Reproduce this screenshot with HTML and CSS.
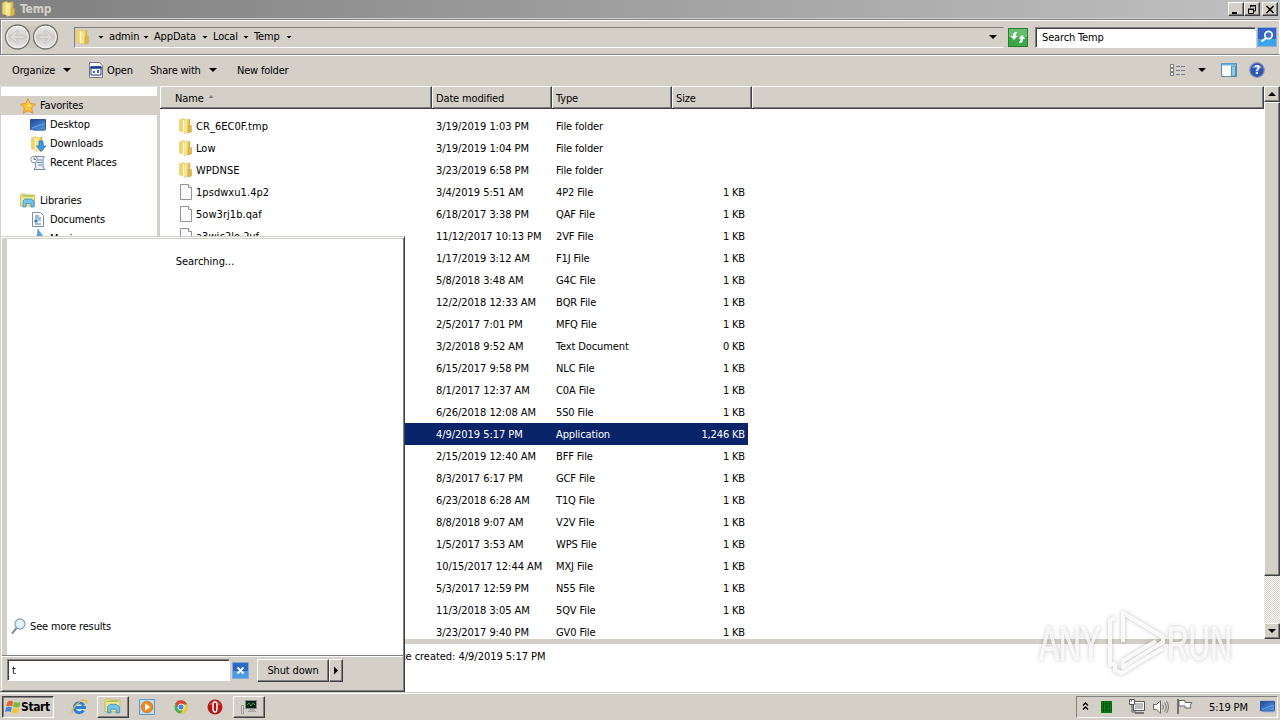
FILE: index.html
```
<!DOCTYPE html>
<html lang="en">
<head>
    <meta charset="UTF-8">
    <meta name="viewport" content="width=device-width, initial-scale=1.0">
    <title>Temp</title>
    <link rel="stylesheet" href="styles.css">
</head>
<body>
    <!-- Shared icons -->
    <svg class="sprite" width="0" height="0">
        <defs>
            <linearGradient id="gFolder" x1="0" x2="1"><stop offset="0" stop-color="#fbf0a8"/><stop offset=".5" stop-color="#f3e07c"/><stop offset="1" stop-color="#cfa83c"/></linearGradient>
            <linearGradient id="gBlue" x1="0" y1="0" x2="1" y2="1"><stop offset="0" stop-color="#1c4796"/><stop offset="1" stop-color="#5b9be8"/></linearGradient>
            <linearGradient id="gBtn" x1="0" y1="0" x2="0" y2="1"><stop offset="0" stop-color="#efedea"/><stop offset=".5" stop-color="#cfccc8"/><stop offset="1" stop-color="#eceae7"/></linearGradient>
            <symbol id="folder" viewBox="0 0 16 16">
                <path d="M1.500 2l4-1.500 1.500 1V14l-5.500-1z" fill="#efd56a" stroke="#e0c465" stroke-width=".6"/>
                <path d="M6 2l6-1v13l-6 1.500z" fill="url(#gFolder)" stroke="#d9ba55" stroke-width=".5"/>
                <path d="M10 8l3.500-.5V14L10 15z" fill="#dcb94e" stroke="#c6a140" stroke-width=".5"/>
                <path d="M5.500 2v12" stroke="#fffbdc" stroke-width="1.200"/>
            </symbol>
            <symbol id="file" viewBox="0 0 16 16">
                <path d="M2.500.5h8l3 3v12h-11z" fill="#fafafa" stroke="#949494"/>
                <path d="M10.500.5v3h3" fill="#fff" stroke="#949494"/>
            </symbol>
            <symbol id="library" viewBox="0 0 16 16">
                <path d="M.5 3.500V2l1-1h4l1 1h8v11h-14z" fill="#f4e68a" stroke="#cdb04a" stroke-width=".8"/>
                <path d="M2 3h11" stroke="#7cba4c"/>
                <path d="M3 8l2-2h6l3 2v6h-3v-3.500H6V14H3z" fill="#74c4ee" stroke="#3b8fc4" stroke-width=".8"/>
            </symbol>
            <symbol id="monitor" viewBox="0 0 16 16">
                <path d="M.5 2.500h15v10H.5z" fill="url(#gBlue)" stroke="#2b5296"/>
                <path d="M1 12.500h14v1.500H4z" fill="#6a98d0"/>
                <path d="M2 11c4-1 8-4 13-4" stroke="#67a6ef" fill="none"/>
            </symbol>
            <symbol id="lens" viewBox="0 0 16 16">
                <path d="M1.500 15l4-5" stroke="#8f8f9b" stroke-width="2.200" stroke-linecap="round"/>
                <circle cx="9" cy="6" r="5" fill="#e3f1fc" stroke="#8ea6c0" stroke-width="1.300"/>
                <path d="M6.500 5a3 3 0 0 1 3-2" stroke="#fff" stroke-width="1.300" fill="none"/>
            </symbol>
        </defs>
    </svg>

    <div class="window">
        <div class="titlebar">
            <svg class="icon"><use href="#folder"/></svg>
            <span class="title">Temp</span>
            <div class="controls">
                <button><svg width="12" height="11"><path d="M2 9h5" stroke="#000" stroke-width="2"/></svg></button>
                <button><svg width="12" height="11"><path d="M4.500 3.500V2h5v5H8M4 1.500h6M2.500 5.500h5v4h-5zM2 5h6" fill="none" stroke="#000"/></svg></button>
                <button class="close"><svg width="12" height="11"><path d="M2.500 2l7 7M9.500 2l-7 7" stroke="#000" stroke-width="1.500"/></svg></button>
            </div>
        </div>

        <div class="addressbar">
            <svg class="nav-buttons" width="58" height="28" viewBox="0 0 58 28">
                <path d="M14 3h28v22H14z" fill="#cbc7c0"/>
                <g fill="url(#gBtn)" stroke="#77736e" stroke-width="1.300"><circle cx="13.500" cy="14" r="12"/><circle cx="41.500" cy="14" r="12"/></g>
                <g fill="none" stroke="#f8f7f5" stroke-width="1"><circle cx="13.500" cy="14" r="10.700"/><circle cx="41.500" cy="14" r="10.700"/></g>
                <g fill="#dedbd7" stroke="#c4c0bb" stroke-width=".8"><path d="M6 14l6-6h3l-4 4.500h9v3h-9l4 4.500h-3z"/><path d="M49 14l-6-6h-3l4 4.500h-9v3h9l-4 4.500h3z"/></g>
            </svg>
            <div class="breadcrumb">
                <svg class="icon"><use href="#folder"/></svg>
                <i class="arrow a0"></i><span class="c-admin">admin</span>
                <i class="arrow"></i><span class="c-appdata">AppData</span>
                <i class="arrow"></i><span class="c-local">Local</span>
                <i class="arrow"></i><span class="c-temp">Temp</span>
                <i class="arrow"></i>
                <i class="arrow big drop"></i>
            </div>
            <svg class="refresh" width="20" height="19" viewBox="0 0 20 19">
                <rect x=".5" y=".5" width="19" height="18" fill="#39a845" stroke="#287d31"/>
                <path d="M1 1h18v8H1z" fill="#67bd6c"/>
                <path d="M9 4c-3 0-4 1-4 4H2.500L6 12l3.500-4H7.500c0-2 .5-2 1.500-3zM11 15c3 0 4-1 4-4h2.500L14 7l-3.500 4h2c0 2-.5 2-1.500 3z" fill="#fff"/>
            </svg>
            <div class="search">Search Temp</div>
            <svg class="search-btn" width="20" height="20" viewBox="0 0 20 20">
                <rect x=".5" y=".5" width="19" height="19" fill="#3463c8" stroke="#9ab0d0"/>
                <path d="M1 12h18v7H1z" fill="#39a5e8"/>
                <path d="M4.500 14.500L9 11" stroke="#fff" stroke-width="2.200"/>
                <circle cx="11.500" cy="8" r="3.700" fill="#3b75ce" stroke="#fff" stroke-width="1.700"/>
            </svg>
        </div>

        <div class="toolbar">
            <span class="t-organize">Organize</span><i class="arrow big"></i>
            <svg class="open-icon" width="14" height="16" viewBox="0 0 14 16">
                <path d="M.5.5h10l3 3v12H.5z" fill="#fff" stroke="#777"/>
                <path d="M2 5h10v8H2z" fill="#fff" stroke="#173a8c"/><path d="M1.500 5.500h11" stroke="#173a8c" stroke-width="2.500"/>
                <path d="M4 9h2v2H4zM8 8h2v3H8z" fill="#395fb0"/>
            </svg>
            <span class="t-open">Open</span>
            <span class="t-share">Share with</span><i class="arrow big"></i>
            <span class="t-new">New folder</span>
            <div class="view-tools">
                <svg width="16" height="13" viewBox="0 0 16 13">
                    <path d="M.5.5h3v3h-3zM.5 4.500h3v3h-3zM.5 8.500h3v3h-3z" fill="#fff" stroke="#777"/>
                    <path d="M6 2.500h4M11 2.500h4M6 6.500h4M11 6.500h4M6 10.500h4M11 10.500h4" stroke="#6f7f95"/>
                </svg>
                <i class="arrow big"></i>
                <svg class="pane" width="16" height="14" viewBox="0 0 16 14">
                    <path d="M.5.5h15v13H.5z" fill="#fff" stroke="#5687ad"/><path d="M1 1.500h14" stroke="#6faed8" stroke-width="2"/>
                    <path d="M10.500 3h4v10h-4z" fill="#8cc8e8" stroke="#5292b8"/>
                </svg>
                <svg class="help" width="16" height="16" viewBox="0 0 16 16">
                    <circle cx="8" cy="8" r="7.300" fill="#2b55b8" stroke="#8c95a8" stroke-width="1.200"/>
                    <path d="M2.500 6a6 5 0 0 1 11 0z" fill="#6b90dd"/>
                    <text x="8" y="12.300" text-anchor="middle" font-size="12" font-weight="bold" fill="#fff">?</text>
                </svg>
            </div>
        </div>

        <div class="content">
            <div class="sidebar">
                <div class="nav-item root selected">
                    <svg class="icon" viewBox="0 0 16 16"><path d="M8 .7l2.200 5 5.300.5-4 3.600 1.200 5.400L8 12.400l-4.700 2.800 1.200-5.400-4-3.600 5.300-.5z" fill="#fcc63a" stroke="#e08a1c" stroke-width=".9"/><path d="M8 3l1.300 4H13L8 9z" fill="#ffe98a"/></svg>
                    <span class="n-fav">Favorites</span>
                </div>
                <div class="nav-item"><svg class="icon"><use href="#monitor"/></svg><span>Desktop</span></div>
                <div class="nav-item">
                    <svg class="icon" viewBox="0 0 16 16"><use href="#folder"/><path d="M9 5h4v5h3l-5 5.500L6.500 10H9z" fill="#3a9be0" stroke="#1e6db4" stroke-width=".7"/></svg>
                    <span>Downloads</span>
                </div>
                <div class="nav-item">
                    <svg class="icon" viewBox="0 0 16 16"><path d="M5 1.500h9.500L13 4v8l2 2.500H4L5.500 12z" fill="#e8f0f6" stroke="#7d8c99"/><path d="M7 5h5M7 7.500h5M8 10h4" stroke="#5590c0"/><circle cx="4" cy="4.500" r="3.300" fill="#f5f9fc" stroke="#8898a5"/><path d="M4 2.500v2h2" stroke="#456" fill="none" stroke-width=".8"/></svg>
                    <span>Recent Places</span>
                </div>
                <div class="nav-item"></div>
                <div class="nav-item root"><svg class="icon"><use href="#library"/></svg><span>Libraries</span></div>
                <div class="nav-item">
                    <svg class="icon" viewBox="0 0 16 16"><path d="M2.500.5h8l3 3v11h-11z" fill="#fff" stroke="#7b8ea3"/><path d="M5 4h4M5 6h6M8 8h3M5 12h6" stroke="#4279b5"/><path d="M4.500 7.500h3v3h-3z" fill="#3e6fa8"/></svg>
                    <span>Documents</span>
                </div>
                <div class="nav-item">
                    <svg class="icon music" viewBox="0 0 16 16"><path d="M8 0c1 4 6 5 4 10-1-3-3-3-4-4v7a3 3 0 1 1-1-2z" fill="#58a8e4" stroke="#2f7ab8" stroke-width=".6"/></svg>
                    <span>Music</span>
                </div>
            </div>
            <div class="files">
                <div class="file-header">
                    <div class="col name">Name <i class="sort"></i></div>
                    <div class="col date">Date modified</div>
                    <div class="col type">Type</div>
                    <div class="col size">Size</div>
                    <div class="col rest"></div>
                </div>
                <div class="file-list" id="fileList"></div>
            </div>
            <div class="scrollbar">
                <button><i class="arrow big up"></i></button>
                <div class="thumb"></div>
                <div class="track"></div>
                <button><i class="arrow big"></i></button>
            </div>
        </div>

        <div class="details"><span>Date created: 4/9/2019 5:17 PM</span></div>
    </div>

    <div class="taskbar">
        <div class="start">
            <svg width="16" height="16" viewBox="0 0 16 16">
                <path d="M2.500 3Q5 1 8 2.500L7 7.500Q4 6 1 7.500z" fill="#e5622a"/><path d="M9 3q3 1.500 6.500 0l-1.200 5Q11 9 8 7.800z" fill="#79b93c"/>
                <path d="M1 8.500Q4 7 6.800 8.500L5.800 13Q3 11.500 0 13z" fill="#3f85dc"/><path d="M7.800 9q3 1 6.300 0L13 13.500q-3 1.500-6.200 0z" fill="#f7c42c"/>
            </svg>
            <span>Start</span>
        </div>
        <div class="tasks">
            <div class="task">
                <svg width="16" height="16" viewBox="0 0 16 16"><circle cx="8" cy="8.500" r="5" fill="#c9e8fa"/><path d="M12.800 6.500A5 5 0 1 0 12.500 11.500M4 8.500h9.500V7" fill="none" stroke="#2a80d0" stroke-width="2.800"/><path d="M1.500 14.500C-1 11 10-1 15 1.500c1 1-.5 3-.5 3" fill="none" stroke="#e9bb35" stroke-width="1.300"/></svg>
            </div>
            <div class="task raised"><svg width="18" height="17"><use href="#library"/></svg></div>
            <div class="task">
                <svg width="16" height="16" viewBox="0 0 16 16"><path d="M.5.500h15v15H.5z" fill="#b9def5" stroke="#5c9dcc"/><circle cx="8" cy="8" r="5.800" fill="#f18a1c" stroke="#d06c10" stroke-width=".7"/><path d="M6 4.500l5.500 3.500L6 11.500z" fill="#fff"/></svg>
            </div>
            <div class="task">
                <svg width="14" height="14" viewBox="0 0 16 16"><circle cx="8" cy="8" r="7.500" fill="#4caf50"/><path d="M1.500 4.200A7.500 7.500 0 0 1 15 5H8L5 10z" fill="#de4436"/><path d="M15 5a7.500 7.500 0 0 1-7.500 10.500L11 9.500 8 5z" fill="#fbc92f"/><circle cx="8" cy="8" r="3.500" fill="#4386ec" stroke="#fff"/></svg>
            </div>
            <div class="task">
                <svg width="16" height="16" viewBox="0 0 16 16"><circle cx="8" cy="8" r="7.500" fill="#b81818"/><path d="M2 6a6.500 6 0 0 1 12 0z" fill="#d84848"/><ellipse cx="8" cy="8" rx="2" ry="5.200" fill="#a81212" stroke="#fff" stroke-width="1.500"/></svg>
            </div>
            <div class="task raised">
                <svg width="16" height="14" viewBox="0 0 16 14"><path d="M4.500.5h11v8h-11z" fill="#0c2415" stroke="#888"/><path d="M6 5l2-2 2 3 2-3 2 2" stroke="#3a9a4e" fill="none"/><path d="M7 11.500h8l-2-2H9z" fill="#b8b8b0" stroke="#888" stroke-width=".5"/><path d="M.5 5.500h2v8h-2z" fill="#ddd" stroke="#999"/></svg>
            </div>
        </div>
        <div class="tray">
            <svg class="chev" width="7" height="9"><path d="M1 3.500L3.500 1 6 3.500M1 7.500L3.500 5 6 7.500" fill="none" stroke="#000" stroke-width="1.300"/></svg>
            <svg class="grid" width="11" height="12">
                <path d="M0 0h11v12H0z" fill="#0a7b12"/><path d="M2.500 0v12M5.500 0v12M8.500 0v12M0 3h11M0 6h11M0 9h11" stroke="#063a0a" stroke-dasharray="1 1"/>
            </svg>
            <svg class="net" width="16" height="15" viewBox="0 0 16 15">
                <path d="M4.500 2.500h11v9h-11z" fill="#fff" stroke="#555"/><path d="M6 4h8v6H6z" fill="#bbb"/><path d="M6 14h9" stroke="#555" stroke-width="1.500"/><path d="M.5.500h5v5h-5z" fill="#fff" stroke="#555"/><path d="M2.500.5v2M3 6v7h4" fill="none" stroke="#555"/>
            </svg>
            <svg class="vol" width="16" height="14" viewBox="0 0 16 14">
                <path d="M.5 4.500h3L7.500.800v12.400L3.500 9.500h-3z" fill="#fff" stroke="#666"/><path d="M9.500 4.500q2 2.500 0 5M11.500 2.500q3.500 4.500 0 9M13.500 1q4 6 0 12" fill="none" stroke="#777"/>
            </svg>
            <svg class="flag" width="16" height="15" viewBox="0 0 16 15">
                <path d="M1 0v15" stroke="#555" stroke-width="1.500"/><path d="M2 1.500h6v2h7l-2 3 1 2.500H8v-2H2z" fill="#fff" stroke="#666"/>
            </svg>
            <span class="clock">5:19 PM</span>
            <svg class="desk" width="15" height="15"><use href="#monitor"/></svg>
        </div>
    </div>

    <div class="start-menu">
        <div class="results">
            <div class="searching">Searching...</div>
            <div class="more"><svg class="icon"><use href="#lens"/></svg><span>See more results</span></div>
        </div>
        <div class="menu-footer">
            <div class="menu-input">t</div>
            <svg class="clear" width="17" height="17" viewBox="0 0 17 17"><path d="M.5.500h16v16H.5z" fill="#2c69c4" stroke="#86a8d8"/><path d="M1 9h15v7H1z" fill="#4b9ce4"/><path d="M5.500 5.500l6 6M11.500 5.500l-6 6" stroke="#fff" stroke-width="1.800"/></svg>
            <button class="shutdown">Shut down</button>
            <button class="shutdown-more"><i class="arrow side"></i></button>
        </div>
    </div>

    <svg class="watermark" width="230" height="76" viewBox="0 0 230 76">
        <g class="wm">
            <text transform="translate(5 54) scale(.615 1)">ANY</text>
            <text transform="translate(133 54) scale(.61 1)">RUN</text>
            <g class="logo">
                <path d="M81 12l-5 2v45l5-2"/>
                <path d="M89 36V7l40 24v5L89 61v-6l33-20"/>
                <path d="M81 57v7l6 3 42-25"/>
            </g>
        </g>
    </svg>

    <script>
        const files = [
            ['CR_6EC0F.tmp', '3/19/2019 1:03 PM', 'File folder', ''],
            ['Low', '3/19/2019 1:04 PM', 'File folder', ''],
            ['WPDNSE', '3/23/2019 6:58 PM', 'File folder', ''],
            ['1psdwxu1.4p2', '3/4/2019 5:51 AM', '4P2 File', '1 KB'],
            ['5ow3rj1b.qaf', '6/18/2017 3:38 PM', 'QAF File', '1 KB'],
            ['a3wic2lo.2vf', '11/12/2017 10:13 PM', '2VF File', '1 KB'],
            ['', '1/17/2019 3:12 AM', 'F1J File', '1 KB'],
            ['', '5/8/2018 3:48 AM', 'G4C File', '1 KB'],
            ['', '12/2/2018 12:33 AM', 'BQR File', '1 KB'],
            ['', '2/5/2017 7:01 PM', 'MFQ File', '1 KB'],
            ['', '3/2/2018 9:52 AM', 'Text Document', '0 KB'],
            ['', '6/15/2017 9:58 PM', 'NLC File', '1 KB'],
            ['', '8/1/2017 12:37 AM', 'C0A File', '1 KB'],
            ['', '6/26/2018 12:08 AM', '5S0 File', '1 KB'],
            ['', '4/9/2019 5:17 PM', 'Application', '1,246 KB'],
            ['', '2/15/2019 12:40 AM', 'BFF File', '1 KB'],
            ['', '8/3/2017 6:17 PM', 'GCF File', '1 KB'],
            ['', '6/23/2018 6:28 AM', 'T1Q File', '1 KB'],
            ['', '8/8/2018 9:07 AM', 'V2V File', '1 KB'],
            ['', '1/5/2017 3:53 AM', 'WPS File', '1 KB'],
            ['', '10/15/2017 12:44 AM', 'MXJ File', '1 KB'],
            ['', '5/3/2017 12:59 PM', 'N55 File', '1 KB'],
            ['', '11/3/2018 3:05 AM', '5QV File', '1 KB'],
            ['', '3/23/2017 9:40 PM', 'GV0 File', '1 KB']
        ];
        const selectedIndex = 14;
        const fileList = document.getElementById('fileList');

        files.forEach((file, i) => {
            const icon = file[2] === 'File folder' ? 'folder' : 'file';
            fileList.innerHTML += `<div class="row ${i === selectedIndex ? 'selected' : ''}">
                <div class="cell name"><svg class="icon"><use href="#${icon}"/></svg><span>${file[0]}</span></div>
                <div class="cell date">${file[1]}</div>
                <div class="cell type">${file[2]}</div>
                <div class="cell size">${file[3]}</div>
            </div>`;
        });
    </script>
</body>
</html>
```
FILE: styles.css
```
* {
    box-sizing: border-box;
}

body {
    margin: 0;
    width: 1280px;
    height: 720px;
    overflow: hidden;
    display: flex;
    flex-direction: column;
    position: relative;
    background: #d4d0c8;
    color: #000;
    font-family: "DejaVu Sans Condensed", "DejaVu Sans", sans-serif;
    font-stretch: condensed;
    font-size: 11px;
    letter-spacing: -0.15px;
    white-space: nowrap;
}

button {
    padding: 0;
    font: inherit;
    letter-spacing: inherit;
    color: #000;
    background: #d4d0c8;
    border: 1px solid;
    border-color: #fff #404040 #404040 #fff;
    box-shadow: inset -1px -1px #808080;
    display: flex;
    align-items: center;
    justify-content: center;
}

.sprite {
    position: absolute;
}

.icon {
    width: 16px;
    height: 16px;
    flex: none;
}

.arrow {
    width: 6px;
    height: 3px;
    background: #000;
    clip-path: polygon(0 0, 100% 0, 50% 100%);
    flex: none;
}

.arrow.big {
    width: 8px;
    height: 4px;
}

.arrow.up {
    clip-path: polygon(50% 0, 100% 100%, 0 100%);
}

.arrow.side {
    width: 4px;
    height: 8px;
    clip-path: polygon(0 0, 100% 50%, 0 100%);
}

.window {
    height: 692px;
    display: flex;
    flex-direction: column;
}

.titlebar {
    height: 18px;
    display: flex;
    align-items: center;
    padding: 0 2px 0 1px;
    background: linear-gradient(90deg, #808080, #c0c0c0);
}

.title {
    margin-left: 3px;
    color: #d4d0c8;
    font-size: 12px;
    font-weight: bold;
    letter-spacing: -0.2px;
}

.controls {
    display: flex;
    margin-left: auto;
}

.controls button {
    width: 16px;
    height: 14px;
}

.controls .close {
    margin-left: 2px;
}

.addressbar {
    height: 36px;
    margin-top: 1px;
    display: flex;
    align-items: center;
    padding: 0 2px 0 3px;
    border: 1px solid #808080;
    border-right-color: #fff;
    box-shadow: inset 1px 1px #fff, 0 1px #fff;
    flex: none;
}

.breadcrumb {
    width: 930px;
    height: 21px;
    margin-left: 12px;
    display: flex;
    align-items: center;
    border: 1px solid;
    border-color: #808080 #d4d0c8 #fff #808080;
}

.breadcrumb span {
    margin: 0 0 1px 5px;
}

.a0 {
    margin-left: 7px;
}

.c-admin {
    width: 34px;
}

.c-appdata {
    width: 48px;
}

.c-local {
    width: 30px;
}

.c-temp {
    width: 32px;
}

.drop {
    margin-left: auto;
    margin-right: 6px;
}

.refresh {
    margin-left: 4px;
}

.search {
    width: 221px;
    height: 21px;
    margin-left: 7px;
    padding: 3px 6px;
    background: #fff;
    border: 1px solid;
    border-color: #808080 #fff #fff #808080;
    box-shadow: inset 1px 1px #404040;
}

.search-btn {
    margin-left: auto;
}

.toolbar {
    height: 31px;
    padding: 0 0 1px 12px;
    display: flex;
    align-items: center;
    flex: none;
}

.t-organize {
    width: 51px;
}

.open-icon {
    margin-left: 18px;
}

.t-open {
    margin-left: 4px;
    width: 43px;
}

.t-share {
    width: 59px;
}

.t-new {
    margin-left: 20px;
}

.t-share,
.t-new {
    letter-spacing: -0.2px;
}

.view-tools {
    margin-left: auto;
    padding-right: 15px;
    display: flex;
    align-items: center;
}

.view-tools .arrow {
    margin-left: 12px;
}

.pane {
    margin-left: 15px;
}

.help {
    margin-left: 12px;
}

.content {
    height: 553px;
    display: flex;
    flex: none;
    overflow: hidden;
}

.sidebar {
    width: 160px;
    padding-top: 9px;
    background: #fff;
    border-top: 1px solid #e8e6e2;
    border-left: 1px solid #d4d0c8;
    border-right: 3px solid #d4d0c8;
    flex: none;
}

.nav-item {
    height: 19px;
    padding-left: 29px;
    display: flex;
    align-items: center;
}

.nav-item span {
    margin-left: 4px;
}

.nav-item.root {
    padding-left: 19px;
}

.nav-item.selected {
    background: #d4d0c8;
}

.music {
    margin-top: -3px;
}

.files {
    width: 1104px;
    background: #fff;
}

.file-header {
    height: 23px;
    display: flex;
    border-bottom: 1px solid #404040;
}

.col {
    padding: 5px 3px 0;
    background: #d4d0c8;
    border-top: 1px solid #fff;
    border-left: 1px solid #fff;
    border-right: 1px solid #404040;
    box-shadow: inset -1px -1px #808080;
}

.col.name {
    width: 272px;
    padding-left: 14px;
}

.col.date,
.col.type {
    width: 120px;
}

.col.size {
    width: 80px;
}

.col.rest {
    flex: 1;
}

.sort {
    display: inline-block;
    width: 5px;
    height: 3px;
    margin: 0 0 4px 2px;
    background: #808080;
    clip-path: polygon(50% 0, 100% 100%, 0 100%);
}

.file-list {
    padding-top: 6px;
}

.row {
    width: 588px;
    height: 22px;
    display: flex;
    align-items: center;
}

.row.selected {
    background: #0a246a;
    color: #fff;
}

.cell.name {
    width: 276px;
    padding-left: 18px;
    display: flex;
    align-items: center;
    letter-spacing: 0.05px;
}

.cell.name span {
    margin-left: 2px;
}

.cell.date {
    width: 120px;
    letter-spacing: -0.05px;
}

.cell.type {
    width: 100px;
    letter-spacing: -0.12px;
}

.cell.size {
    width: 89px;
    text-align: right;
}

.scrollbar {
    width: 16px;
    display: flex;
    flex-direction: column;
}

.scrollbar button {
    height: 16px;
    width: 16px;
    flex: none;
}

.thumb {
    height: 474px;
    background: #d4d0c8;
    border: 1px solid;
    border-color: #fff #404040 #404040 #fff;
    box-shadow: inset -1px -1px #808080;
}

.track {
    flex: 1;
    background: repeating-conic-gradient(#fff 0 25%, #d4d0c8 0 50%) 0 0 / 2px 2px;
}

.details {
    flex: 1;
    padding: 6px 0 0 388px;
    background: #fff;
    border-top: 5px solid #d4d0c8;
    letter-spacing: -0.03px;
}

.taskbar {
    height: 28px;
    padding: 2px 2px 2px 2px;
    display: flex;
    align-items: center;
    background: #d4d0c8;
    border-top: 1px solid #d4d0c8;
    box-shadow: inset 0 1px #fff;
}

.start {
    width: 52px;
    height: 22px;
    padding-left: 2px;
    display: flex;
    align-items: center;
    border: 1px solid;
    border-color: #404040 #fff #fff #404040;
    box-shadow: inset 1px 1px #808080;
    font-size: 12px;
    font-weight: bold;
    letter-spacing: -0.4px;
}

.start span {
    padding-top: 1px;
}

.tasks {
    margin-left: 9px;
    display: flex;
    gap: 2px;
}

.task {
    width: 32px;
    height: 22px;
    display: flex;
    align-items: center;
    justify-content: center;
}

.task.raised {
    border: 1px solid;
    border-color: #fff #404040 #404040 #fff;
    box-shadow: inset -1px -1px #808080;
}

.tray {
    width: 202px;
    height: 22px;
    margin-left: auto;
    padding-left: 5px;
    display: flex;
    align-items: center;
    border: 1px solid;
    border-color: #808080 #fff #fff #808080;
}

.grid {
    margin-left: 12px;
}

.net {
    margin-left: 17px;
}

.vol {
    margin-left: 8px;
}

.flag {
    margin-left: 8px;
}

.clock {
    margin-left: 16px;
    padding-top: 1px;
}

.desk {
    margin-left: auto;
    margin-right: 2px;
}

.start-menu {
    position: absolute;
    left: 0;
    top: 236px;
    width: 405px;
    height: 456px;
    display: flex;
    flex-direction: column;
    background: #d4d0c8;
    border: 1px solid;
    border-color: #d4d0c8 #404040 #404040 #d4d0c8;
    box-shadow: inset 1px 1px #fff, inset -1px -1px #808080;
}

.results {
    height: 416px;
    margin: 2px 1px 0 6px;
    display: flex;
    flex-direction: column;
    justify-content: space-between;
    background: #fff;
}

.searching {
    padding-top: 16px;
    text-align: center;
    letter-spacing: 0;
}

.more {
    padding: 0 0 21px 4px;
    display: flex;
    align-items: center;
}

.more span {
    margin-left: 3px;
}

.menu-footer {
    height: 34px;
    margin: 0 1px;
    padding: 2px 0 0 5px;
    display: flex;
    align-items: flex-start;
    border-top: 1px solid #808080;
    box-shadow: inset 0 1px #fff;
}

.menu-input {
    width: 223px;
    height: 22px;
    margin-top: 1px;
    padding: 4px;
    background: #fff;
    border: 1px solid;
    border-color: #808080 #fff #fff #808080;
    box-shadow: inset 1px 1px #404040;
}

.clear {
    margin: 4px 0 0 2px;
}

.shutdown {
    width: 72px;
    height: 23px;
    margin: 1px 0 0 8px;
}

.shutdown-more {
    width: 14px;
    height: 23px;
    margin-top: 1px;
}

.watermark {
    position: absolute;
    left: 1034px;
    top: 606px;
}

.wm {
    fill: rgba(255, 255, 255, 0.75);
    stroke: rgba(255, 255, 255, 0.6);
    stroke-width: 1;
    filter: drop-shadow(0 0 2px rgba(0, 0, 0, 0.28));
    font: 49px "Liberation Sans", sans-serif;
    letter-spacing: 0;
}

.logo {
    fill: none;
    stroke: rgba(255, 255, 255, 0.85);
    stroke-width: 4;
    stroke-linejoin: round;
}
```
